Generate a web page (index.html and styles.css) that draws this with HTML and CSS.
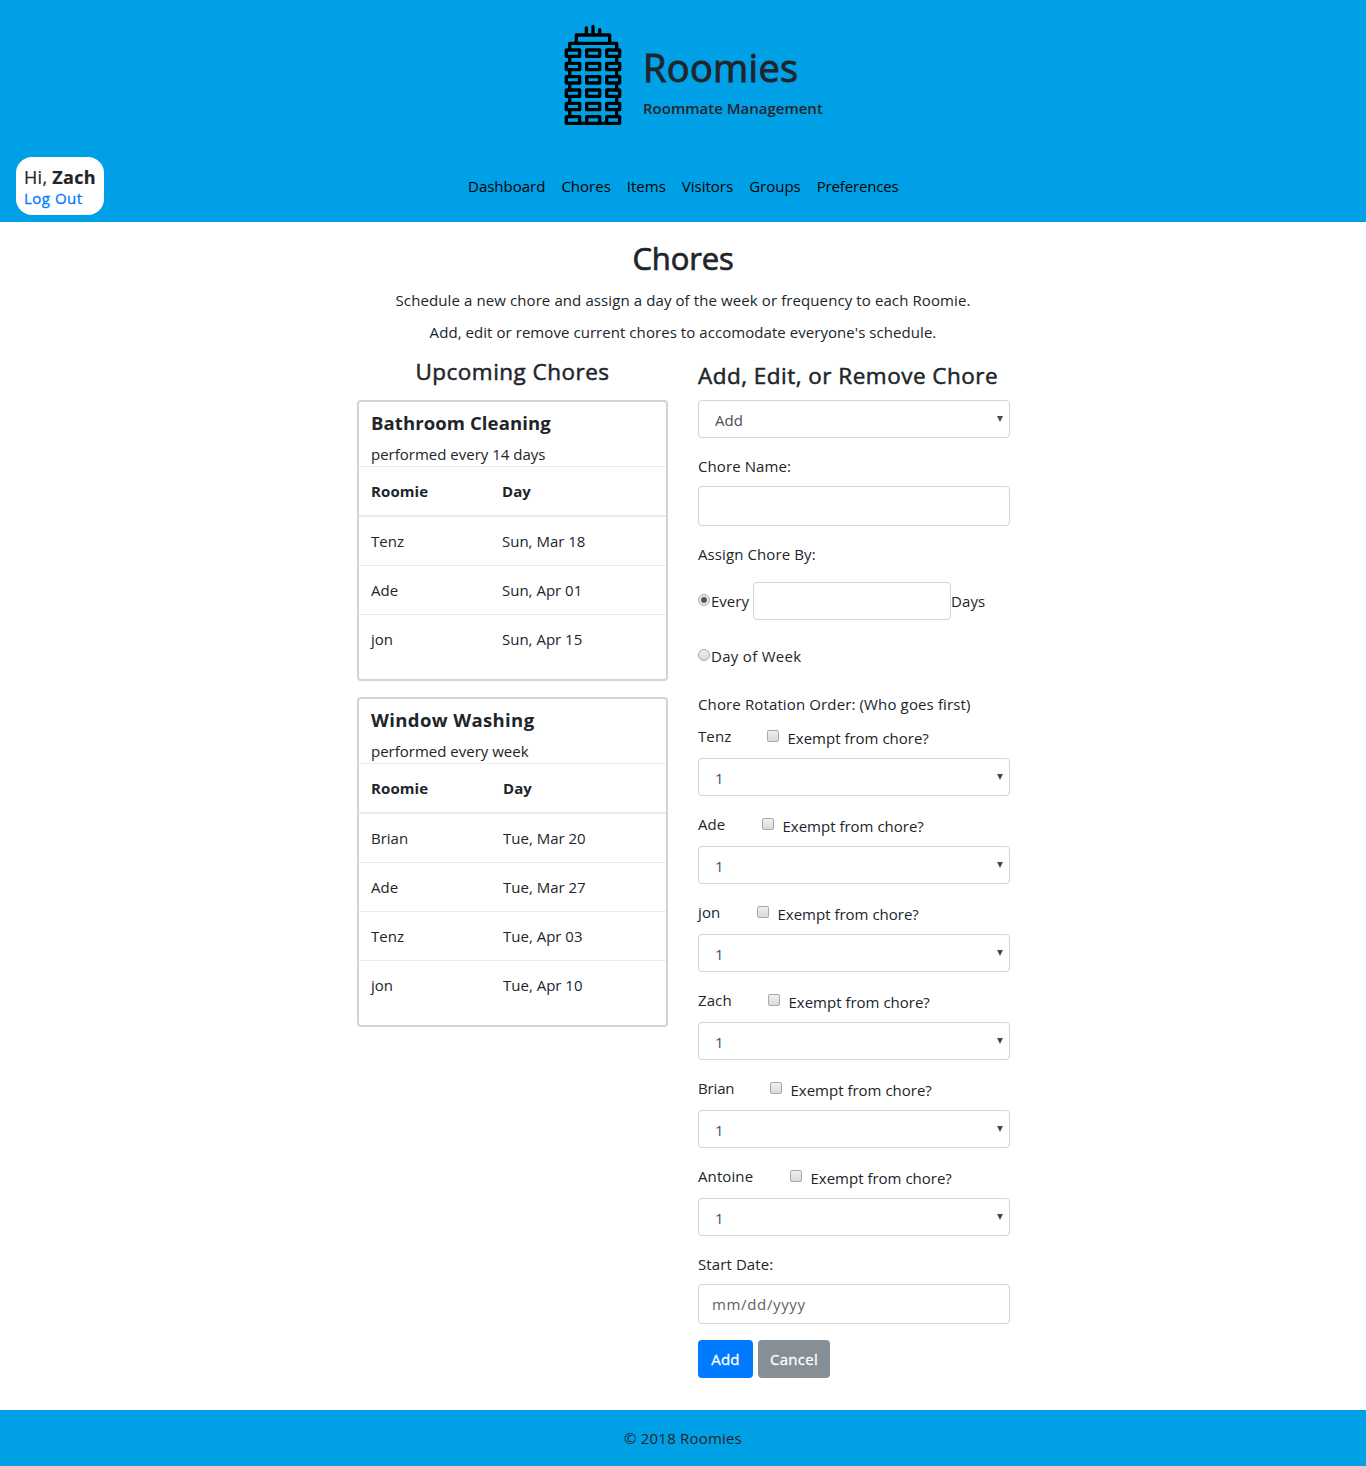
FILE: index.html
```html
<!DOCTYPE html>
<html lang="en">
<head>
<meta charset="utf-8">
<title>Roomies - Chores</title>
<link rel="stylesheet" href="styles.css">
</head>
<body>
<header class="site-header">
  <div class="brand">
    <svg class="logo" viewBox="42 27 174 306" fill="none" stroke="#000" stroke-width="10" stroke-linecap="round" stroke-linejoin="round">
      <path d="M109 39V58M129 34V58M149 44V58M79 84V60H179V84M59 104V85H200V104"/>
      <path d="M59 125V145M59 165V185M59 205V225M59 245V265M59 285V305M200 125V145M200 165V185M200 205V225M200 245V265M200 285V305"/>
      <g id="floor"><path d="M49 105H89V124H49ZM110 105H149V124H110ZM170 105H209V124H170Z"/></g>
      <use href="#floor" y="40"/><use href="#floor" y="80"/><use href="#floor" y="120"/><use href="#floor" y="160"/>
      <path d="M49 325V305H89V325M110 325V305H149V325M170 325V305H209V325M49 325H209"/>
    </svg>
    <div class="brand-text">
      <h1>Roomies</h1>
      <p>Roommate Management</p>
    </div>
  </div>
  <div class="bar">
    <div class="user"><span class="hello">Hi, <b>Zach</b></span><a href="#">Log Out</a></div>
    <nav class="nav">
      <a href="#">Dashboard</a><a href="#">Chores</a><a href="#">Items</a><a href="#">Visitors</a><a href="#">Groups</a><a href="#">Preferences</a>
    </nav>
  </div>
</header>
<main>
  <div class="intro">
    <h2>Chores</h2>
    <p>Schedule a new chore and assign a day of the week or frequency to each Roomie.</p>
    <p class="second">Add, edit or remove current chores to accomodate everyone's schedule.</p>
  </div>
  <div class="columns">
    <section class="upcoming">
      <h3>Upcoming Chores</h3>
      <article class="card">
        <h4>Bathroom Cleaning</h4>
        <p>performed every 14 days</p>
        <div class="row head"><span>Roomie</span><span>Day</span></div>
        <div class="row"><span>Tenz</span><span>Sun, Mar 18</span></div>
        <div class="row"><span>Ade</span><span>Sun, Apr 01</span></div>
        <div class="row"><span>jon</span><span>Sun, Apr 15</span></div>
      </article>
      <article class="card wide">
        <h4>Window Washing</h4>
        <p>performed every week</p>
        <div class="row head"><span>Roomie</span><span>Day</span></div>
        <div class="row"><span>Brian</span><span>Tue, Mar 20</span></div>
        <div class="row"><span>Ade</span><span>Tue, Mar 27</span></div>
        <div class="row"><span>Tenz</span><span>Tue, Apr 03</span></div>
        <div class="row"><span>jon</span><span>Tue, Apr 10</span></div>
      </article>
    </section>
    <form class="editor">
      <h3>Add, Edit, or Remove Chore</h3>
      <div class="select"><select><option>Add</option></select></div>
      <label class="label">Chore Name:</label>
      <input class="field" type="text">
      <div class="label">Assign Chore By:</div>
      <div class="every"><input type="radio" name="by" checked><span class="word">Every</span><input class="days" type="text"><span>Days</span></div>
      <div class="weekday"><input type="radio" name="by"><span>Day of Week</span></div>
      <div class="rotation">Chore Rotation Order: (Who goes first)</div>
      <div class="person"><span>Tenz</span><input type="checkbox"><label>Exempt from chore?</label></div>
      <div class="select order"><select><option>1</option></select></div>
      <div class="person ade"><span>Ade</span><input type="checkbox"><label>Exempt from chore?</label></div>
      <div class="select order"><select><option>1</option></select></div>
      <div class="person jon"><span>jon</span><input type="checkbox"><label>Exempt from chore?</label></div>
      <div class="select order"><select><option>1</option></select></div>
      <div class="person zach"><span>Zach</span><input type="checkbox"><label>Exempt from chore?</label></div>
      <div class="select order"><select><option>1</option></select></div>
      <div class="person brian"><span>Brian</span><input type="checkbox"><label>Exempt from chore?</label></div>
      <div class="select order"><select><option>1</option></select></div>
      <div class="person antoine"><span>Antoine</span><input type="checkbox"><label>Exempt from chore?</label></div>
      <div class="select order"><select><option>1</option></select></div>
      <label class="label start">Start Date:</label>
      <input class="field date" type="text" placeholder="mm/dd/yyyy">
      <div class="actions"><button class="add" type="button">Add</button><button class="cancel" type="button">Cancel</button></div>
    </form>
  </div>
</main>
<footer>© 2018 Roomies</footer>
</body>
</html>
```
FILE: styles.css
```css
* { box-sizing: border-box; }
body { margin: 0; font: 400 15px/24px "Open Sans", "Noto Sans", sans-serif; letter-spacing: 0.1px; color: #212529; background: #fff; }
h1, h2, h3, h4, p { margin: 0; font-weight: 400; }
h1, h2, h3 { -webkit-text-stroke: 0.5px currentColor; }
a { text-decoration: none; }
input, select, button { font: inherit; letter-spacing: inherit; margin: 0; }

.site-header { height: 222px; background: #00a0e6; }
.brand { display: flex; height: 157px; padding: 24px 0 0 564px; }
.logo { width: 58px; height: 102px; flex: none; }
.brand-text { padding: 19px 0 0 21px; }
.brand-text h1 { font-size: 38px; line-height: 48px; letter-spacing: 0.3px; -webkit-text-stroke-width: 0.9px; }
.brand-text p { font-weight: 600; padding-top: 5px; letter-spacing: 0; }
.bar { display: flex; align-items: flex-start; padding-left: 16px; }
.user { width: 88px; height: 58px; border-radius: 16px; background: #fff; padding: 8px; display: flex; flex-direction: column; }
.hello { font-size: 18px; line-height: 24px; letter-spacing: 0.3px; white-space: nowrap; -webkit-text-stroke: 0.2px currentColor; }
.user a { line-height: 19px; letter-spacing: 0.5px; color: #007bff; -webkit-text-stroke: 0.3px currentColor; }
.nav { display: flex; gap: 16px; margin: 17px 0 0 364px; letter-spacing: 0; }
.nav a { color: #000; }
.nav a:last-child { letter-spacing: -0.16px; }

main { height: 1188px; }
.intro { text-align: center; padding-top: 16px; }
.intro h2 { font-size: 31px; line-height: 40px; margin-bottom: 10px; letter-spacing: -0.15px; -webkit-text-stroke-width: 0.7px; }
.intro p { margin-bottom: 8px; }
.intro .second { letter-spacing: 0.06px; }
.columns { display: grid; grid-template-columns: 311px 312px; column-gap: 30px; margin-left: 357px; align-items: start; }
h3 { font-size: 22.5px; line-height: 29px; letter-spacing: 0.48px; }
.upcoming { padding-top: 5px; }
.upcoming h3 { text-align: center; margin-bottom: 14px; }
.card { border: 2px solid #d3d3d3; border-radius: 4px; margin-bottom: 16px; padding-bottom: 16px; }
.card h4 { font-size: 18.5px; line-height: 24px; font-weight: 700; padding: 9px 12px 0; }
.card.wide h4 { letter-spacing: 0.38px; }
.card p { padding: 7px 12px 0; height: 31px; letter-spacing: 0; }
.row { display: grid; grid-template-columns: 131px 1fr; padding-left: 12px; border-top: 1px solid #e9ecef; line-height: 48px; letter-spacing: 0; }
.wide .row { grid-template-columns: 132px 1fr; }
.row.head { font-weight: 700; border-bottom: 2px solid #e9ecef; letter-spacing: 0.1px; }
.head + .row { border-top: 0; }

.editor { padding-top: 9px; }
.editor h3 { margin-bottom: 10px; white-space: nowrap; }
.select { position: relative; height: 38px; }
.select::after { content: ""; position: absolute; right: 7px; top: 16px; border: 3px solid transparent; border-top: 6px solid #444b52; border-bottom: 0; }
.select select { appearance: none; width: 100%; height: 38px; padding: 2px 16px 0; border: 1px solid #ced4da; border-radius: 4px; background: #fff; color: #495057; }
.label { display: block; margin: 16px 0 8px; }
.field { display: block; width: 100%; height: 40px; padding: 1px 13px; border: 1px solid #ced4da; border-radius: 4px; }
.date { letter-spacing: 0.65px; }
.date::placeholder { color: #5c6268; }
.every { display: flex; align-items: center; height: 38px; margin-top: 16px; }
.word { width: 42px; letter-spacing: 0; }
.days { width: 198px; height: 38px; border: 1px solid #ced4da; border-radius: 4px; }
.weekday { display: flex; align-items: center; margin-top: 24px; letter-spacing: 0.3px; }
.rotation { margin: 24px 0 8px; letter-spacing: 0.13px; }
input[type=radio], input[type=checkbox] { appearance: none; flex: none; width: 12px; height: 12px; border: 1px solid #a9a9a9; background: linear-gradient(#efefef, #dadada); }
input[type=radio] { border-radius: 50%; margin: -2px 1px 0 0; }
input[type=radio]:checked { background: radial-gradient(circle, #555 0 2.5px, #e8e8e8 3.4px); }
input[type=checkbox] { border-radius: 2px; margin: 6px 8px 0 0; }
.person { display: flex; align-items: flex-start; height: 34px; }
.person span { width: 69px; }
.person label { padding-top: 2px; letter-spacing: 0; margin-left: 0.5px; }
.person.ade span { width: 64px; }
.person.jon span { width: 59px; }
.person.zach span { width: 70px; }
.person.brian span { width: 72px; letter-spacing: -0.15px; }
.person.antoine span { width: 92px; }
.order { margin-bottom: 16px; }
.actions { display: flex; gap: 5px; margin-top: 16px; }
.actions button { height: 38px; border: 0; border-radius: 4px; color: #fff; padding: 0; letter-spacing: 0.25px; -webkit-text-stroke: 0.3px currentColor; }
.add { width: 55px; background: #007bff; }
.cancel { width: 72px; background: #868e96; }
footer { height: 56px; background: #00a0e6; text-align: center; padding-top: 16px; letter-spacing: 0.2px; }
```
